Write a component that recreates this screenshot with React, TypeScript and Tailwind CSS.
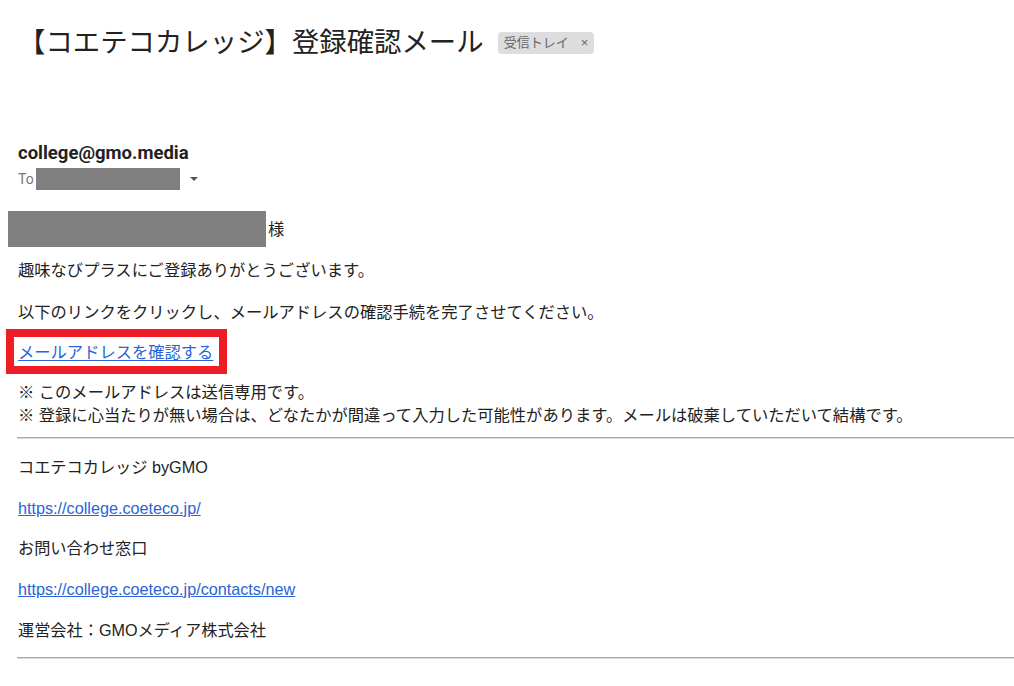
import React from 'react';

const font = { fontFamily: '"Liberation Sans", Arial, "Noto Sans CJK JP", sans-serif' };

const Rule: React.FC = () => (
  <div className="ml-[17px] h-[2px] border-t border-[#a9a9a9] bg-[#dcdcdc]" />
);

const App: React.FC = () => {
  return (
    <div className="w-[1014px] h-[686px] overflow-hidden bg-white text-[#222]" style={font}>
      {/* subject */}
      <div className="pt-[25px] pl-[18px] flex items-center h-[61px]">
        <h1 className="text-[27.4px] leading-[36px] font-normal text-[#222] whitespace-nowrap">
          【コエテコカレッジ】登録確認メール
        </h1>
        <span className="ml-[14px] h-[22px] px-[6px] rounded-[4px] bg-[#dddddd] text-[#666] text-[13px] leading-[22px] flex items-center gap-[12px]">
          受信トレイ <span className="text-[13px]">×</span>
        </span>
      </div>

      {/* sender */}
      <div className="pl-[18px] mt-[82px] h-[20px] leading-[20px] text-[18.5px] font-bold text-[#222]" style={{ fontFamily: 'Roboto, "Liberation Sans", sans-serif' }}>
        college@gmo.media
      </div>
      <div className="pl-[18px] mt-[5px] h-[22px] flex items-center">
        <span className="text-[14px] text-[#777]" style={{ fontFamily: 'Roboto, "Liberation Sans", sans-serif' }}>To</span>
        <span className="ml-[2px] w-[144px] h-[22px] bg-[#808080]" />
        <span className="ml-[10px] w-0 h-0 border-l-[4px] border-r-[4px] border-t-[4px] border-l-transparent border-r-transparent border-t-[#555]" />
      </div>

      {/* body */}
      <div className="mt-[21px] pl-[8px] h-[36px] flex items-center text-[16.3px]">
        <span className="w-[258px] h-[36px] bg-[#808080]" />
        <span className="ml-[2px] leading-[20px]">様</span>
      </div>

      <div className="text-[16.3px]">
        <p className="pl-[18px] mt-[13px] leading-[20px]">趣味なびプラスにご登録ありがとうございます。</p>
        <p className="pl-[18px] mt-[22px] leading-[20px]">以下のリンクをクリックし、メールアドレスの確認手続を完了させてください。</p>

        <div className="ml-[6px] mt-[7px] w-[221px] h-[45px] border-[8px] border-[#ee1c25] bg-white flex items-center pl-[4px]">
          <a href="#" className="leading-[20px] text-[#2a64d6] underline underline-offset-2">
            メールアドレスを確認する
          </a>
        </div>

        <div className="pl-[18px] mt-[7px] leading-[23px]">
          <p>※ このメールアドレスは送信専用です。</p>
          <p>※ 登録に心当たりが無い場合は、どなたかが間違って入力した可能性があります。メールは破棄していただいて結構です。</p>
        </div>
      </div>

      <div className="mt-[10px]">
        <Rule />
      </div>

      {/* footer */}
      <div className="pl-[18px] text-[16.2px] leading-[20px]">
        <p className="mt-[18px]">コエテコカレッジ byGMO</p>
        <p className="mt-[21px]">
          <a href="#" className="text-[#2a64d6] underline">https://college.coeteco.jp/</a>
        </p>
        <p className="mt-[20px]">お問い合わせ窓口</p>
        <p className="mt-[21px]">
          <a href="#" className="text-[#2a64d6] underline">https://college.coeteco.jp/contacts/new</a>
        </p>
        <p className="mt-[21px]">運営会社：GMOメディア株式会社</p>
      </div>

      <div className="mt-[17px]">
        <Rule />
      </div>
    </div>
  );
};

export default App;
